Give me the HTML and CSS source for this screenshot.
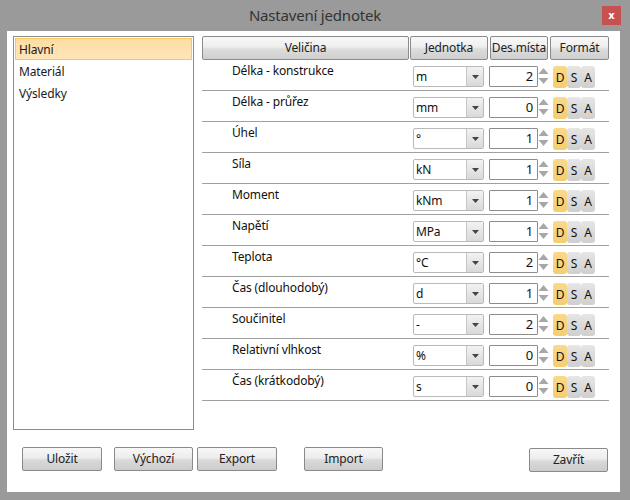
FILE: index.html
```html
<!DOCTYPE html>
<html lang="cs">
<head>
<meta charset="utf-8">
<title>Nastavení jednotek</title>
<link rel="stylesheet" href="styles.css">
</head>
<body>
<div class="window">
  <div class="titlebar">
    <span class="title">Nastavení jednotek</span>
    <button class="close">x</button>
  </div>
  <div class="client">
    <div class="main">
      <ul class="list">
        <li class="item selected">Hlavní</li>
        <li class="item">Materiál</li>
        <li class="item">Výsledky</li>
      </ul>
      <div class="table">
        <div class="thead">
          <div class="th th-name">Veličina</div>
          <div class="th th-unit">Jednotka</div>
          <div class="th th-dec">Des.místa</div>
          <div class="th th-fmt">Formát</div>
        </div>
        <div class="row"><div class="name">Délka - konstrukce</div><div class="combo"><span class="cval">m</span><span class="cbtn"><svg width="7" height="4" viewBox="0 0 7 4"><polygon points="0,0 7,0 3.5,4" fill="#444"/></svg></span></div><div class="num">2</div><div class="spin"><svg width="11" height="21" viewBox="0 0 11 21"><polygon points="0.5,8 5.5,2 10.5,8" fill="#a8a8a8"/><polygon points="0.5,12 5.5,18 10.5,12" fill="#a8a8a8"/></svg></div><div class="fmt"><span class="fb on">D</span><span class="fb">S</span><span class="fb">A</span></div></div>
        <div class="row"><div class="name">Délka - průřez</div><div class="combo"><span class="cval">mm</span><span class="cbtn"><svg width="7" height="4" viewBox="0 0 7 4"><polygon points="0,0 7,0 3.5,4" fill="#444"/></svg></span></div><div class="num">0</div><div class="spin"><svg width="11" height="21" viewBox="0 0 11 21"><polygon points="0.5,8 5.5,2 10.5,8" fill="#a8a8a8"/><polygon points="0.5,12 5.5,18 10.5,12" fill="#a8a8a8"/></svg></div><div class="fmt"><span class="fb on">D</span><span class="fb">S</span><span class="fb">A</span></div></div>
        <div class="row"><div class="name">Úhel</div><div class="combo"><span class="cval">°</span><span class="cbtn"><svg width="7" height="4" viewBox="0 0 7 4"><polygon points="0,0 7,0 3.5,4" fill="#444"/></svg></span></div><div class="num">1</div><div class="spin"><svg width="11" height="21" viewBox="0 0 11 21"><polygon points="0.5,8 5.5,2 10.5,8" fill="#a8a8a8"/><polygon points="0.5,12 5.5,18 10.5,12" fill="#a8a8a8"/></svg></div><div class="fmt"><span class="fb on">D</span><span class="fb">S</span><span class="fb">A</span></div></div>
        <div class="row"><div class="name">Síla</div><div class="combo"><span class="cval">kN</span><span class="cbtn"><svg width="7" height="4" viewBox="0 0 7 4"><polygon points="0,0 7,0 3.5,4" fill="#444"/></svg></span></div><div class="num">1</div><div class="spin"><svg width="11" height="21" viewBox="0 0 11 21"><polygon points="0.5,8 5.5,2 10.5,8" fill="#a8a8a8"/><polygon points="0.5,12 5.5,18 10.5,12" fill="#a8a8a8"/></svg></div><div class="fmt"><span class="fb on">D</span><span class="fb">S</span><span class="fb">A</span></div></div>
        <div class="row"><div class="name">Moment</div><div class="combo"><span class="cval">kNm</span><span class="cbtn"><svg width="7" height="4" viewBox="0 0 7 4"><polygon points="0,0 7,0 3.5,4" fill="#444"/></svg></span></div><div class="num">1</div><div class="spin"><svg width="11" height="21" viewBox="0 0 11 21"><polygon points="0.5,8 5.5,2 10.5,8" fill="#a8a8a8"/><polygon points="0.5,12 5.5,18 10.5,12" fill="#a8a8a8"/></svg></div><div class="fmt"><span class="fb on">D</span><span class="fb">S</span><span class="fb">A</span></div></div>
        <div class="row"><div class="name">Napětí</div><div class="combo"><span class="cval">MPa</span><span class="cbtn"><svg width="7" height="4" viewBox="0 0 7 4"><polygon points="0,0 7,0 3.5,4" fill="#444"/></svg></span></div><div class="num">1</div><div class="spin"><svg width="11" height="21" viewBox="0 0 11 21"><polygon points="0.5,8 5.5,2 10.5,8" fill="#a8a8a8"/><polygon points="0.5,12 5.5,18 10.5,12" fill="#a8a8a8"/></svg></div><div class="fmt"><span class="fb on">D</span><span class="fb">S</span><span class="fb">A</span></div></div>
        <div class="row"><div class="name">Teplota</div><div class="combo"><span class="cval">°C</span><span class="cbtn"><svg width="7" height="4" viewBox="0 0 7 4"><polygon points="0,0 7,0 3.5,4" fill="#444"/></svg></span></div><div class="num">2</div><div class="spin"><svg width="11" height="21" viewBox="0 0 11 21"><polygon points="0.5,8 5.5,2 10.5,8" fill="#a8a8a8"/><polygon points="0.5,12 5.5,18 10.5,12" fill="#a8a8a8"/></svg></div><div class="fmt"><span class="fb on">D</span><span class="fb">S</span><span class="fb">A</span></div></div>
        <div class="row"><div class="name">Čas (dlouhodobý)</div><div class="combo"><span class="cval">d</span><span class="cbtn"><svg width="7" height="4" viewBox="0 0 7 4"><polygon points="0,0 7,0 3.5,4" fill="#444"/></svg></span></div><div class="num">1</div><div class="spin"><svg width="11" height="21" viewBox="0 0 11 21"><polygon points="0.5,8 5.5,2 10.5,8" fill="#a8a8a8"/><polygon points="0.5,12 5.5,18 10.5,12" fill="#a8a8a8"/></svg></div><div class="fmt"><span class="fb on">D</span><span class="fb">S</span><span class="fb">A</span></div></div>
        <div class="row"><div class="name">Součinitel</div><div class="combo"><span class="cval">-</span><span class="cbtn"><svg width="7" height="4" viewBox="0 0 7 4"><polygon points="0,0 7,0 3.5,4" fill="#444"/></svg></span></div><div class="num">2</div><div class="spin"><svg width="11" height="21" viewBox="0 0 11 21"><polygon points="0.5,8 5.5,2 10.5,8" fill="#a8a8a8"/><polygon points="0.5,12 5.5,18 10.5,12" fill="#a8a8a8"/></svg></div><div class="fmt"><span class="fb on">D</span><span class="fb">S</span><span class="fb">A</span></div></div>
        <div class="row"><div class="name">Relativní vlhkost</div><div class="combo"><span class="cval">%</span><span class="cbtn"><svg width="7" height="4" viewBox="0 0 7 4"><polygon points="0,0 7,0 3.5,4" fill="#444"/></svg></span></div><div class="num">0</div><div class="spin"><svg width="11" height="21" viewBox="0 0 11 21"><polygon points="0.5,8 5.5,2 10.5,8" fill="#a8a8a8"/><polygon points="0.5,12 5.5,18 10.5,12" fill="#a8a8a8"/></svg></div><div class="fmt"><span class="fb on">D</span><span class="fb">S</span><span class="fb">A</span></div></div>
        <div class="row"><div class="name">Čas (krátkodobý)</div><div class="combo"><span class="cval">s</span><span class="cbtn"><svg width="7" height="4" viewBox="0 0 7 4"><polygon points="0,0 7,0 3.5,4" fill="#444"/></svg></span></div><div class="num">0</div><div class="spin"><svg width="11" height="21" viewBox="0 0 11 21"><polygon points="0.5,8 5.5,2 10.5,8" fill="#a8a8a8"/><polygon points="0.5,12 5.5,18 10.5,12" fill="#a8a8a8"/></svg></div><div class="fmt"><span class="fb on">D</span><span class="fb">S</span><span class="fb">A</span></div></div>
      </div>
    </div>
    <div class="footer">
      <button class="btn b-save">Uložit</button>
      <button class="btn b-default">Výchozí</button>
      <button class="btn b-export">Export</button>
      <button class="btn b-import">Import</button>
      <button class="btn b-close">Zavřít</button>
    </div>
  </div>
</div>
</body>
</html>
```

FILE: styles.css
```css
* { box-sizing: border-box; }
html, body { margin: 0; padding: 0; }
body {
  font-family: "Noto Sans", "Open Sans", sans-serif;
  font-size: 12px;
  letter-spacing: -0.15px;
  color: #1a1a1a;
  background: #9a9a9a;
}
.window {
  width: 630px;
  height: 500px;
  background: #9a9a9a;
  display: flex;
  flex-direction: column;
}
.titlebar {
  height: 31px;
  position: relative;
  display: flex;
  justify-content: center;
  align-items: center;
}
.title {
  font-size: 15px;
  color: #333;
  letter-spacing: -0.2px;
  margin-top: -1px;
}
.close {
  position: absolute;
  right: 9px;
  top: 6px;
  width: 19px;
  height: 19px;
  border: 0;
  padding: 0;
  background: #c75050;
  color: #fff;
  font-family: "DejaVu Sans", sans-serif;
  font-weight: bold;
  font-size: 10px;
  line-height: 17px;
}
.client {
  margin: 0 10px 8px 7px;
  flex: 1;
  background: #fff;
  padding: 5px 0 0 6px;
  display: flex;
  flex-direction: column;
}
.main {
  display: flex;
  gap: 8px;
}
.list {
  list-style: none;
  margin: 0;
  padding: 1px;
  width: 181px;
  height: 394px;
  border: 1px solid #8c8c8c;
}
.item {
  height: 22px;
  line-height: 21px;
  padding-left: 3px;
  border: 1px solid transparent;
  margin: 0;
}
.item.selected {
  border-color: #f4c85a;
  background: linear-gradient(#fedda4, #fee5b8);
}
.table {
  width: 407px;
}
.thead {
  display: flex;
  height: 24px;
}
.th {
  height: 24px;
  border: 1px solid #8a8a8a;
  border-radius: 2px;
  background: linear-gradient(#f9f9f9 0%, #eeeeee 45%, #dcdcdc 55%, #cfcfcf 100%);
  display: flex;
  align-items: center;
  justify-content: center;
  color: #222;
  padding-bottom: 1px;
}
.th-name { width: 207px; }
.th-unit { width: 78px; margin-left: 1px; }
.th-dec { width: 58px; margin-left: 2px; }
.th-fmt { width: 59px; margin-left: 2px; }
.row {
  display: flex;
  align-items: flex-start;
  height: 31px;
  border-bottom: 1px solid #a0a0a0;
}
.name {
  width: 207px;
  padding-left: 30px;
  padding-top: 3px;
  line-height: 16px;
  color: #111;
}
.combo {
  margin-left: 4px;
  margin-top: 6px;
  width: 71px;
  height: 21px;
  border: 1px solid #b9b9b9;
  border-radius: 2px;
  display: flex;
  background: #fff;
}
.cval {
  flex: 1;
  padding-left: 2px;
  padding-top: 2px;
  line-height: 16px;
  color: #111;
}
.cbtn {
  width: 17px;
  border-left: 1px solid #c6c6c6;
  background: linear-gradient(#f2f2f2, #d9d9d9);
  display: flex;
  align-items: center;
  justify-content: center;
}
.num {
  margin-left: 5px;
  margin-top: 6px;
  width: 49px;
  height: 21px;
  border: 1px solid #8c8c8c;
  border-radius: 1px;
  text-align: right;
  padding-right: 4px;
  line-height: 19px;
  font-size: 13px;
  color: #111;
}
.spin {
  margin-top: 6px;
  width: 11px;
  height: 21px;
}
.spin svg { display: block; }
.fmt {
  display: flex;
  margin-left: 4px;
  margin-top: 6px;
}
.fb {
  width: 14px;
  height: 22px;
  display: flex;
  align-items: center;
  justify-content: center;
  border-radius: 3px;
  background: linear-gradient(#e6e6e6, #cfcfcf);
  color: #111;
  font-size: 12px;
}
.fb.on {
  background: linear-gradient(#fbd98a, #f6cd6f);
}
.footer {
  display: flex;
  margin-top: 17px;
  padding-left: 9px;
  align-items: flex-start;
}
.btn {
  height: 24px;
  width: 80px;
  border: 1px solid #8a8a8a;
  border-radius: 2px;
  background: linear-gradient(#f8f8f8 0%, #ececec 45%, #d9d9d9 55%, #cccccc 100%);
  font-family: "Noto Sans", "Open Sans", sans-serif;
  font-size: 12px;
  letter-spacing: -0.15px;
  color: #222;
  padding: 0 0 1px 0;
}
.b-default { margin-left: 12px; width: 79px; }
.b-export { margin-left: 4px; }
.b-import { margin-left: 27px; width: 79px; }
.b-close { margin-left: 146px; width: 79px; margin-top: 1px; }
```
